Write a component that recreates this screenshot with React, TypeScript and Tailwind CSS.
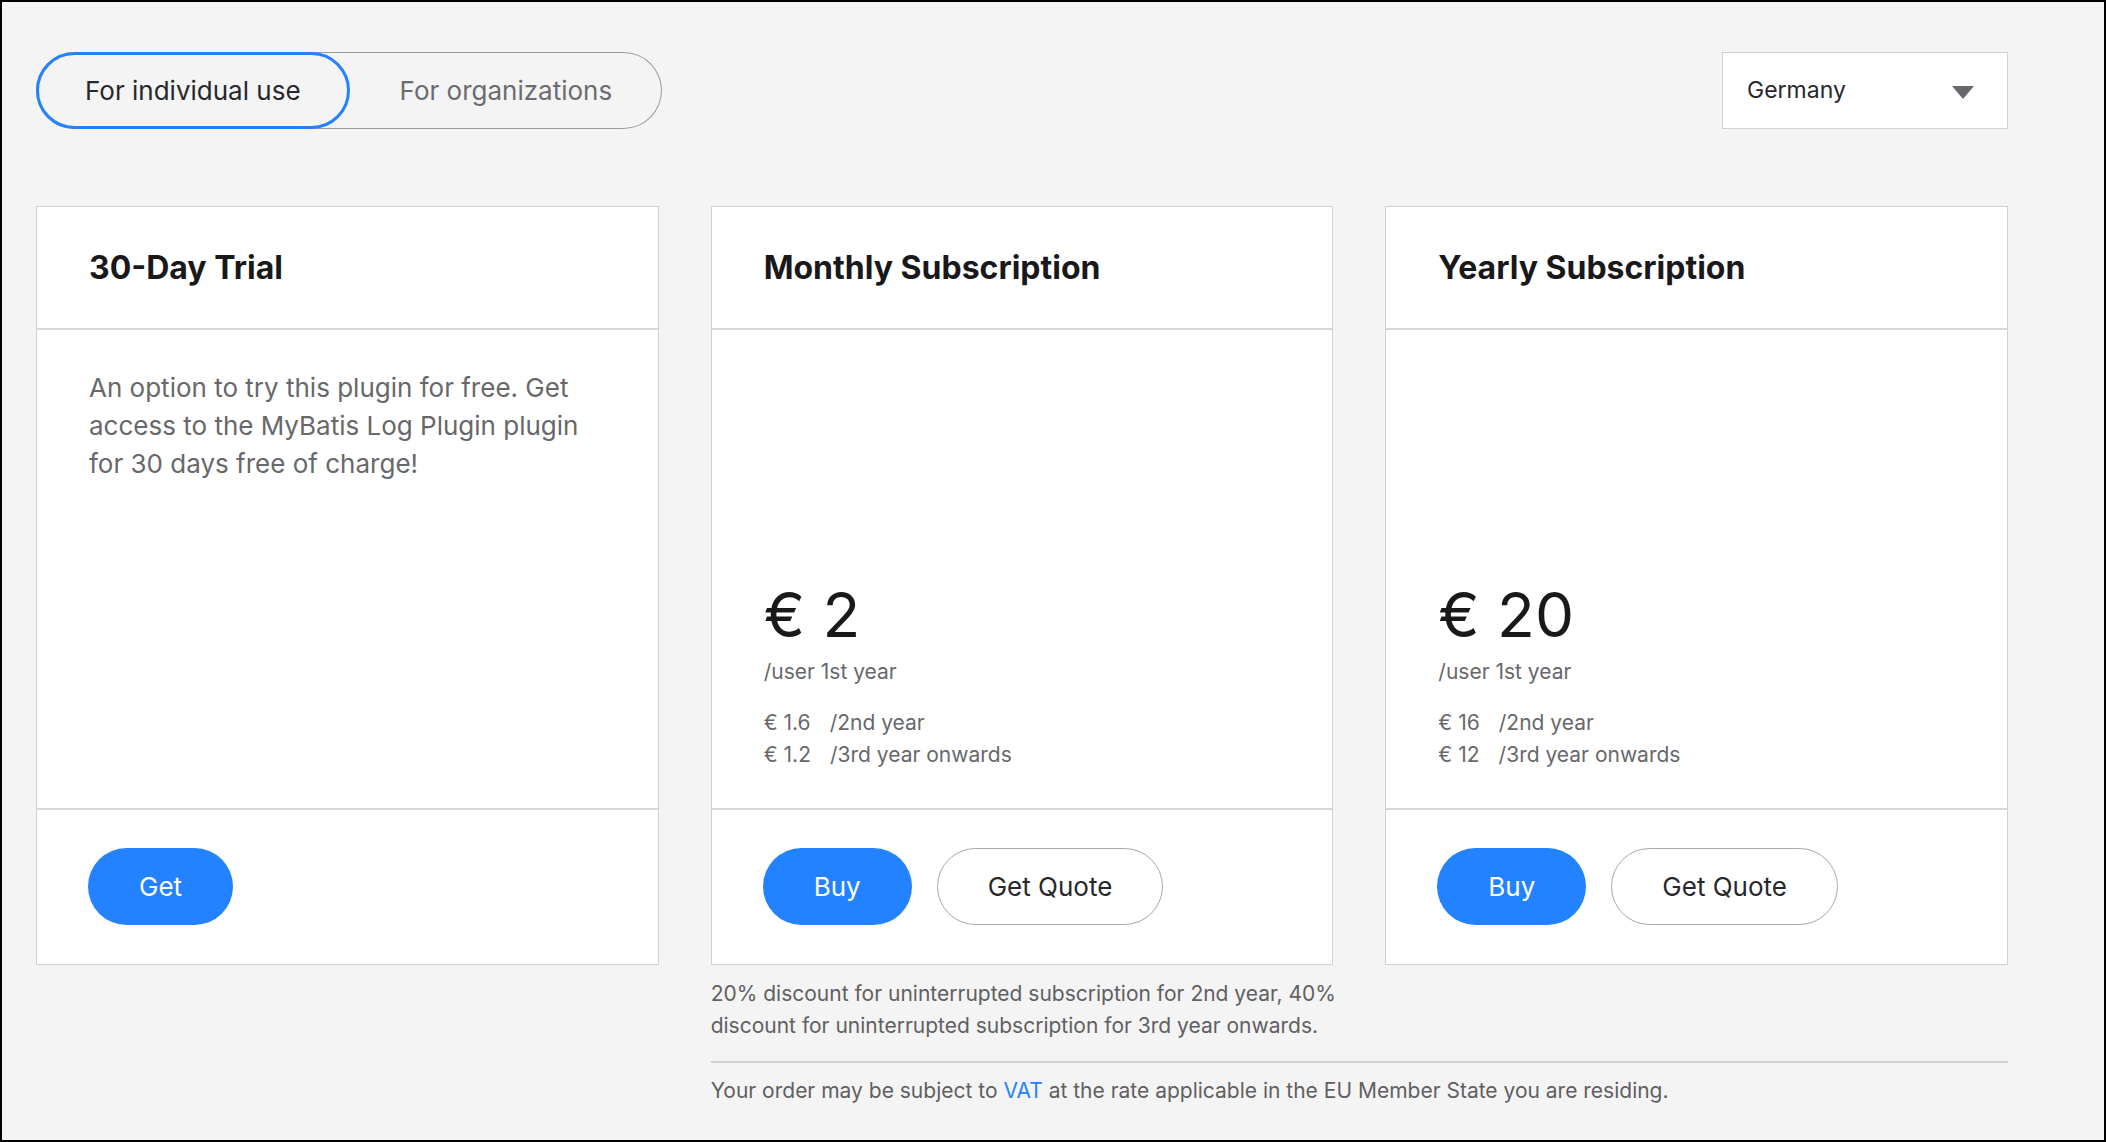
import { useState } from "react";

type Plan = {
  title: string;
  description?: string;
  price?: string;
  renewals?: { price: string; period: string }[];
  action: string;
  quote?: boolean;
};

const plans: Plan[] = [
  {
    title: "30-Day Trial",
    description:
      "An option to try this plugin for free. Get access to the MyBatis Log Plugin plugin for 30 days free of charge!",
    action: "Get",
  },
  {
    title: "Monthly Subscription",
    price: "€ 2",
    renewals: [
      { price: "€ 1.6", period: "/2nd year" },
      { price: "€ 1.2", period: "/3rd year onwards" },
    ],
    action: "Buy",
    quote: true,
  },
  {
    title: "Yearly Subscription",
    price: "€ 20",
    renewals: [
      { price: "€ 16", period: "/2nd year" },
      { price: "€ 12", period: "/3rd year onwards" },
    ],
    action: "Buy",
    quote: true,
  },
];

function AudienceToggle() {
  const [active, setActive] = useState(0);
  return (
    <div className="flex rounded-full bg-[#f4f4f4] ring-1 ring-inset ring-[#9c9c9c]">
      {["For individual use", "For organizations"].map((label, i) => (
        <button
          key={label}
          type="button"
          aria-pressed={active === i}
          onClick={() => setActive(i)}
          className={
            active === i
              ? "h-[77px] rounded-full border-3 border-[#2382ff] px-[46px] text-[26px] text-[#27282c]"
              : "h-[77px] rounded-full border-3 border-transparent px-[47px] text-[26px] text-[#6b6c6f]"
          }
        >
          {label}
        </button>
      ))}
    </div>
  );
}

function CountrySelect() {
  return (
    <div className="relative">
      <select
        aria-label="Country"
        className="h-[77px] w-[286px] appearance-none border border-[#d1d1d2] bg-white px-6 text-[23px] text-[#27282c]"
      >
        <option>Germany</option>
      </select>
      <svg
        viewBox="0 0 22 13"
        className="pointer-events-none absolute top-[34px] right-[34px] h-[13px] w-[22px] fill-[#67686b]"
        aria-hidden="true"
      >
        <path d="M0 0h22L11 13z" />
      </svg>
    </div>
  );
}

function PlanCard({ plan }: { plan: Plan }) {
  return (
    <article className="flex flex-col border border-[#d1d1d2] bg-white">
      <h2 className="border-b-2 border-[#d8d8d9] px-[52px] pt-[41px] pb-10 text-[32px] leading-10 font-bold text-[#19191c]">
        {plan.title}
      </h2>
      <div className="flex min-h-[480px] flex-col justify-between border-b-2 border-[#d8d8d9] px-[52px] pt-[39px] pb-[37px]">
        <p className="text-[26px] leading-[38px] text-[#67686b]">{plan.description}</p>
        {plan.price && (
          <div className="text-[21px] leading-8 text-[#67686b]">
            <p className="mb-[5px] text-[62px] leading-[72px] text-[#19191c]">{plan.price}</p>
            <p>/user 1st year</p>
            <dl className="mt-[19px]">
              {plan.renewals?.map((r) => (
                <div key={r.period} className="flex gap-[19px]">
                  <dt>{r.price}</dt>
                  <dd>{r.period}</dd>
                </div>
              ))}
            </dl>
          </div>
        )}
      </div>
      <div className="flex gap-[25px] px-[51px] pt-[38px] pb-[39px] text-[26px]">
        <button type="button" className="h-[77px] rounded-full bg-[#2382ff] px-[51px] text-white">
          {plan.action}
        </button>
        {plan.quote && (
          <button
            type="button"
            className="h-[77px] rounded-full border border-[#a8a8a8] px-[50px] text-[#27282c]"
          >
            Get Quote
          </button>
        )}
      </div>
    </article>
  );
}

export default function App() {
  return (
    <main className="min-h-screen border-2 border-black bg-[#f4f4f4] pt-[50px] pr-24 pb-6 pl-[34px] font-['Inter',sans-serif]">
      <header className="flex items-start justify-between">
        <AudienceToggle />
        <CountrySelect />
      </header>
      <div className="mt-[77px] grid grid-cols-3 gap-x-[52px] text-[21px] leading-8 text-[#5f6062]">
        {plans.map((plan) => (
          <PlanCard key={plan.title} plan={plan} />
        ))}
        <p className="col-start-2 -mr-4 pt-[13px] pb-[19px]">
          20% discount for uninterrupted subscription for 2nd year, 40% discount for uninterrupted
          subscription for 3rd year onwards.
        </p>
        <p className="col-span-2 col-start-2 border-t-2 border-[#d1d1d2] pt-3">
          Your order may be subject to{" "}
          <a href="#vat" className="text-[#2382ff]">
            VAT
          </a>{" "}
          at the rate applicable in the EU Member State you are residing.
        </p>
      </div>
    </main>
  );
}
